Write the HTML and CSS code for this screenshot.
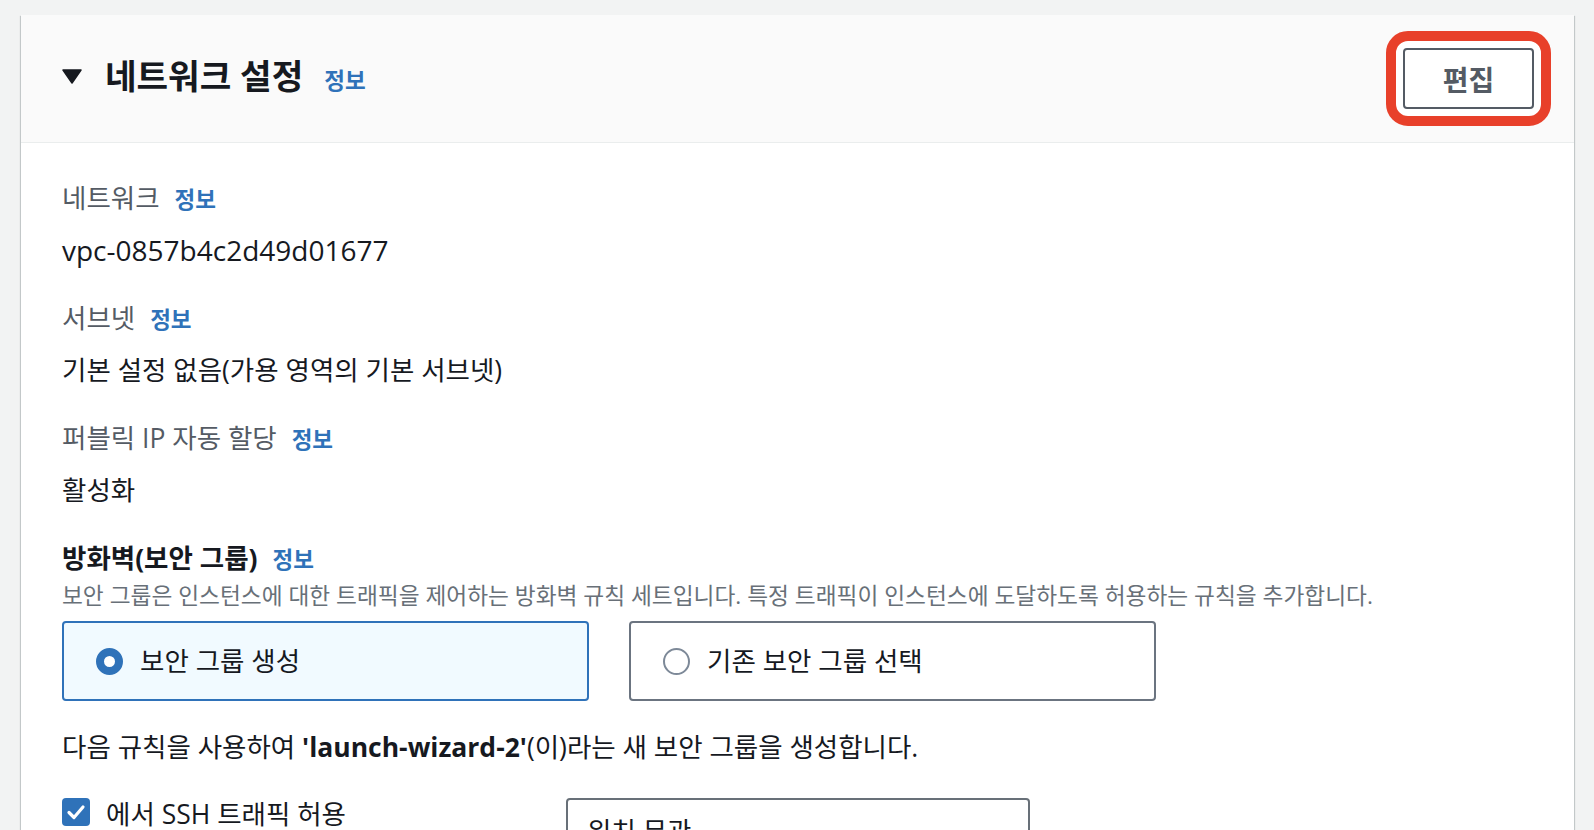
FILE: index.html
```html
<!DOCTYPE html>
<html lang="ko">
<head>
<meta charset="utf-8">
<title>네트워크 설정</title>
<link rel="stylesheet" href="styles.css">
</head>
<body>
<div class="card">
  <div class="card-header">
    <div class="header-title">
      <svg class="caret" width="20" height="15" viewBox="0 0 20 15"><path d="M1 1 H19 L10 14 Z" fill="#16191f" stroke="#16191f" stroke-width="1.5" stroke-linejoin="round"/></svg>
      <h2 class="title">네트워크 설정</h2>
      <a class="info info-header" href="#">정보</a>
    </div>
    <div class="highlight"><button class="btn">편집</button></div>
  </div>
  <div class="card-body">
    <div class="field">
      <div class="label">네트워크<a class="info" href="#">정보</a></div>
      <div class="value value-id">vpc-0857b4c2d49d01677</div>
    </div>
    <div class="field">
      <div class="label">서브넷<a class="info" href="#">정보</a></div>
      <div class="value">기본 설정 없음(가용 영역의 기본 서브넷)</div>
    </div>
    <div class="field">
      <div class="label">퍼블릭 IP 자동 할당<a class="info" href="#">정보</a></div>
      <div class="value">활성화</div>
    </div>
    <div class="firewall">
      <div class="fw-title">방화벽(보안 그룹)<a class="info" href="#">정보</a></div>
      <div class="fw-desc">보안 그룹은 인스턴스에 대한 트래픽을 제어하는 방화벽 규칙 세트입니다. 특정 트래픽이 인스턴스에 도달하도록 허용하는 규칙을 추가합니다.</div>
      <div class="tiles">
        <div class="tile tile-selected"><span class="radio radio-on"></span>보안 그룹 생성</div>
        <div class="tile"><span class="radio"></span>기존 보안 그룹 선택</div>
      </div>
      <p class="rule-text">다음 규칙을 사용하여 <b>'launch-wizard-2'</b>(이)라는 새 보안 그룹을 생성합니다.</p>
      <div class="ssh-row">
        <div class="check">
          <span class="checkbox"><svg width="28" height="28" viewBox="0 0 28 28"><path d="M7 14.5 L12 19.5 L21 9" fill="none" stroke="#fff" stroke-width="3.2" stroke-linecap="round" stroke-linejoin="round"/></svg></span>
          <span class="check-label">에서 SSH 트래픽 허용</span>
        </div>
        <div class="select">위치 무관</div>
      </div>
    </div>
  </div>
</div>
</body>
</html>
```

FILE: styles.css
```css
html, body {
  height: 830px;
  overflow: hidden;
}
body {
  margin: 0;
  padding: 15px 20px 0 21px;
  background: #f2f3f3;
  font-family: "Open Sans", "Noto Sans CJK KR", sans-serif;
  font-feature-settings: "palt";
  font-size: 26.5px;
  color: #16191f;
}
.card {
  background: #fff;
  box-shadow: 0 1px 1px 0 rgba(0, 28, 36, 0.3), 1px 1px 1px 0 rgba(0, 28, 36, 0.15), -1px 1px 1px 0 rgba(0, 28, 36, 0.15);
}
.card-header {
  height: 127px;
  display: flex;
  align-items: center;
  justify-content: space-between;
  padding: 0 23px 0 41px;
  background: #fafafa;
  border-bottom: 1px solid #eaeded;
}
.header-title {
  display: flex;
  align-items: baseline;
  padding-bottom: 6px;
}
.caret {
  align-self: center;
  margin-right: 23px;
  margin-top: 2px;
}
.title {
  margin: 0;
  font-size: 34.3px;
  font-weight: 700;
  line-height: 44px;
}
.info {
  color: #2f72b9;
  font-size: 22.5px;
  font-weight: 700;
  text-decoration: none;
  margin-left: 15px;
}
.info-header {
  margin-left: 21px;
}
.highlight {
  border: 10px solid #e8402a;
  border-radius: 22px;
  background: #fff;
  padding: 7px;
  display: flex;
}
.btn {
  width: 131px;
  height: 61px;
  border: 2px solid #545b64;
  border-radius: 4px;
  background: #fff;
  font-family: inherit;
  font-feature-settings: "palt";
  font-size: 28px;
  font-weight: 700;
  color: #545b64;
  padding: 0;
}
.card-body {
  padding: 37px 41px 0 41px;
}
.field {
  margin-bottom: 32px;
}
.label {
  color: #545b64;
  line-height: 36px;
}
.value {
  margin-top: 14px;
  line-height: 36px;
}
.value-id {
  font-size: 28px;
}
.fw-title {
  font-weight: 700;
  line-height: 36px;
}
.fw-desc {
  margin-top: 3px;
  font-size: 22.7px;
  line-height: 30px;
  color: #687078;
}
.tiles {
  display: flex;
  gap: 40px;
  margin-top: 10px;
}
.tile {
  width: 527px;
  height: 80px;
  box-sizing: border-box;
  display: flex;
  align-items: center;
  padding-left: 32px;
  border: 2px solid #6b7480;
  border-radius: 4px;
  background: #fff;
  line-height: 36px;
}
.tile-selected {
  border-color: #2f72b9;
  background: #f1faff;
}
.radio {
  width: 27px;
  height: 27px;
  box-sizing: border-box;
  border-radius: 50%;
  border: 2px solid #7d8998;
  background: #fff;
  margin-right: 17px;
  flex: none;
}
.radio-on {
  border: 8px solid #2f72b9;
}
.rule-text {
  margin: 28px 0 0;
  line-height: 36px;
}
.rule-text b {
  font-weight: 700;
}
.ssh-row {
  display: grid;
  grid-template-columns: 504px 464px;
  align-items: start;
  margin-top: 33px;
}
.check {
  display: flex;
  align-items: flex-start;
  gap: 16px;
}
.check-label {
  margin-top: 2px;
  line-height: 28px;
}
.checkbox {
  width: 28px;
  height: 28px;
  border-radius: 4px;
  background: #2f72b9;
  display: flex;
  flex: none;
}
.select {
  height: 62px;
  box-sizing: border-box;
  border: 2px solid #687078;
  border-radius: 4px;
  padding-left: 19px;
  display: flex;
  align-items: center;
}
```
